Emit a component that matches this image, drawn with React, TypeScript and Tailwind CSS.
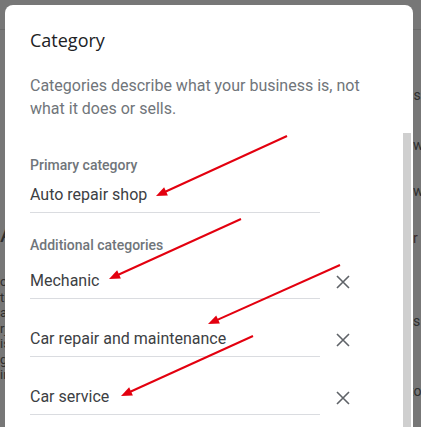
import React from "react";

const F = { fontFamily: "Roboto, 'Liberation Sans', sans-serif" };

function XIcon() {
  return (
    <svg width="14" height="14" viewBox="0 0 14 14" className="shrink-0">
      <path d="M1 1 L13 13 M13 1 L1 13" stroke="#5f6368" strokeWidth="1.6" strokeLinecap="butt" />
    </svg>
  );
}

function Field({ value, removable }: { value: string; removable?: boolean }) {
  return (
    <div className="flex items-center">
      <div className="w-[290px] border-b border-[#dadce0] pb-[5px] text-[16px] leading-[24px] text-[#3c4043]">
        {value}
      </div>
      {removable && (
        <div className="ml-[16px] mb-[4px] flex items-center">
          <XIcon />
        </div>
      )}
    </div>
  );
}

function Arrow({ x1, y1, x2, y2 }: { x1: number; y1: number; x2: number; y2: number }) {
  const dx = x2 - x1;
  const dy = y2 - y1;
  const len = Math.hypot(dx, dy);
  const ux = dx / len;
  const uy = dy / len;
  const hl = 11;
  const hw = 4.5;
  const bx = x2 - ux * hl;
  const by = y2 - uy * hl;
  const px = -uy;
  const py = ux;
  const pts = `${x2},${y2} ${bx + px * hw},${by + py * hw} ${bx - px * hw},${by - py * hw}`;
  return (
    <g>
      <line x1={x1} y1={y1} x2={bx + ux * 2} y2={by + uy * 2} stroke="#e3000f" strokeWidth="2" />
      <polygon points={pts} fill="#e3000f" />
    </g>
  );
}

export default function App() {
  return (
    <div className="relative h-[427px] w-[421px] overflow-hidden bg-[#777777]" style={F}>
      {/* underlying page (dimmed) */}
      <div className="h-[30px] border-b border-[#6a6a6a]" />
      <div className="flex">
        <div className="w-[6px] overflow-hidden text-[#2e2e2e]">
          <div className="mt-[190px] text-[24px] leading-[28px]">A</div>
          <div className="mt-[26px] flex flex-col text-[13px] leading-[15.5px]">
            <span>or</span>
            <span>ti</span>
            <span>al</span>
            <span>rj</span>
            <span>is</span>
            <span>g</span>
            <span>ir</span>
          </div>
        </div>
        <div className="flex-1" />
        <div className="w-[8px] overflow-hidden text-[14px] leading-[18px] text-[#2e2e2e]">
          <div className="mt-[56px] -ml-[3px]">is</div>
          <div className="mt-[32px]">w</div>
          <div className="mt-[28px]">w</div>
          <div className="mt-[29px] text-[#3a2a2a]">r</div>
          <div className="mt-[65px]">s</div>
          <div className="mt-[52px] -ml-[4px]">to</div>
        </div>
      </div>

      {/* dialog */}
      <div className="absolute left-[5px] top-[5px] flex h-[440px] w-[408px] rounded-t-[8px] bg-white">
        <div className="flex-1 pl-[25px] pt-[23px]">
          <div className="text-[18px] leading-[24px] text-[#202124]" style={{ fontFamily: "'Open Sans', Roboto, sans-serif" }}>
            Category
          </div>
          <div className="mt-[22px] w-[345px] text-[16px] leading-[23px] text-[#70757a]">
            Categories describe what your business is, not what it does or sells.
          </div>
          <div className="mt-[35px] text-[14px] font-medium leading-[20px] text-[#70757a]">Primary category</div>
          <div className="mt-[8px]">
            <Field value="Auto repair shop" />
          </div>
          <div className="mt-[22px] text-[14px] font-medium leading-[20px] text-[#70757a]">Additional categories</div>
          <div className="mt-[14px] flex flex-col gap-[28px]">
            <Field value="Mechanic" removable />
            <Field value="Car repair and maintenance" removable />
            <Field value="Car service" removable />
          </div>
        </div>
        <div className="mr-[2px] mt-[128px] w-[8px] bg-[#cfcfcf]" />
      </div>

      {/* annotation arrows */}
      <svg className="pointer-events-none absolute left-0 top-0" width="421" height="427">
        <Arrow x1={287} y1={136} x2={156} y2={196} />
        <Arrow x1={241} y1={219} x2={109} y2={279} />
        <Arrow x1={340} y1={265} x2={208} y2={324} />
        <Arrow x1={253} y1={336} x2={121} y2={396} />
      </svg>
    </div>
  );
}
